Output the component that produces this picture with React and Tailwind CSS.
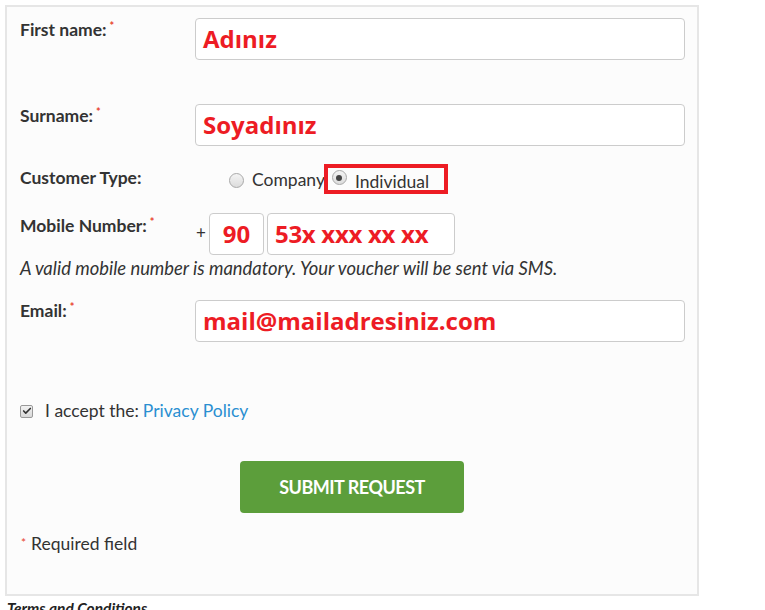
import { Check } from "lucide-react";

const LATO = "font-['Lato',_'Open_Sans',_sans-serif]";
const RED_TXT = "font-['Open_Sans',_sans-serif] font-bold text-[24px] text-[#ed1c24]";

function Req() {
  return <span className="text-[#e8432f] text-[11px] align-top relative -top-[4px] ml-[3px]">*</span>;
}

function Label({ children, req, className = "" }) {
  return (
    <div className={`w-[175px] shrink-0 text-[17.5px] leading-[20px] font-bold text-[#333] ${className}`}>
      {children}
      {req && <Req />}
    </div>
  );
}

function Box({ value, className = "" }) {
  return (
    <div className={`h-[42px] border border-[#ccc] rounded-[4px] bg-white flex items-center px-[7px] ${className}`}>
      <span className={`${RED_TXT} leading-none`}>{value}</span>
    </div>
  );
}

function Radio({ checked }) {
  return (
    <span className="w-[15px] h-[15px] rounded-full border border-[#a9a9a9] bg-gradient-to-b from-[#f4f4f4] to-[#dcdcdc] flex items-center justify-center shrink-0">
      {checked && <span className="w-[6px] h-[6px] rounded-full bg-[#444]" />}
    </span>
  );
}

export default function App() {
  return (
    <div className={`min-h-[610px] bg-white ${LATO} overflow-hidden`}>
      <div className="ml-[5px] mt-[5px] w-[694px] h-[591px] border-2 border-[#e6e6e6] bg-[#fcfcfc] pl-[13px] pr-[12px] pt-[11px]">
        {/* first name */}
        <div className="flex">
          <Label req className="pt-[2px]">First name:</Label>
          <Box value="Adınız" className="w-[490px]" />
        </div>

        {/* surname */}
        <div className="flex mt-[44px]">
          <Label req className="pt-[2px]">Surname:</Label>
          <Box value="Soyadınız" className="w-[490px]" />
        </div>

        {/* customer type */}
        <div className="flex mt-[18px] items-start">
          <Label className="pt-[4px]">Customer Type:</Label>
          <div className="flex items-start text-[17.5px] text-[#333] ml-[34px]">
            <div className="flex items-center gap-[8px] pt-[6px]">
              <Radio />
              <span className="leading-[20px]">Company</span>
            </div>
            <div className="w-[124px] h-[30px] -ml-[1px] border-4 border-[#ed1c24] pl-[4px] pt-[1px] flex items-start">
              <span className="mt-[1px]"><Radio checked /></span>
              <span className="ml-[8px] mt-[3px] leading-[20px]">Individual</span>
            </div>
          </div>
        </div>

        {/* mobile */}
        <div className="flex mt-[19px]">
          <Label req className="pt-[3px]">Mobile Number:</Label>
          <div className="flex items-center">
            <span className="text-[17px] text-[#333] w-[14px] pl-[1px] mb-[2px]">+</span>
            <Box value="90" className="w-[55px] justify-center" />
            <Box value="53x xxx xx xx" className="w-[188px] ml-[3px] tracking-[-0.3px]" />
          </div>
        </div>
        <div className="italic text-[18.4px] leading-[22px] text-[#333] mt-[2px]">
          A valid mobile number is mandatory. Your voucher will be sent via SMS.
        </div>

        {/* email */}
        <div className="flex mt-[21px]">
          <Label req className="pt-[1px]">Email:</Label>
          <Box value="mail@mailadresiniz.com" className="w-[490px]" />
        </div>

        {/* accept */}
        <div className="flex items-center mt-[59px] text-[17.5px] text-[#333]">
          <span className="w-[13px] h-[13px] rounded-[2px] border border-[#999] bg-gradient-to-b from-[#f2f2f2] to-[#d8d8d8] flex items-center justify-center">
            <Check size={10} strokeWidth={4} className="text-[#333]" />
          </span>
          <span className="ml-[12px] leading-[20px]">I accept the: </span>
          <span className="ml-[4px] leading-[20px] text-[#2a8fd1]">Privacy Policy</span>
        </div>

        {/* submit */}
        <div className="flex mt-[40px] pl-[220px]">
          <button className="w-[224px] h-[52px] rounded-[4px] bg-[#5c9e3b] text-white text-[18px] font-bold tracking-[-0.5px]">
            SUBMIT REQUEST
          </button>
        </div>

        <div className="mt-[21px] text-[17.5px] leading-[20px] text-[#333]">
          <span className="text-[#e8432f] text-[12px] align-top relative -top-[1px] ml-[1px] mr-[5px]">*</span>
          Required field
        </div>
      </div>
      <div className="ml-[7px] mt-[3px] italic font-bold text-[15.5px] leading-[18px] text-[#222]">Terms and Conditions</div>
    </div>
  );
}
